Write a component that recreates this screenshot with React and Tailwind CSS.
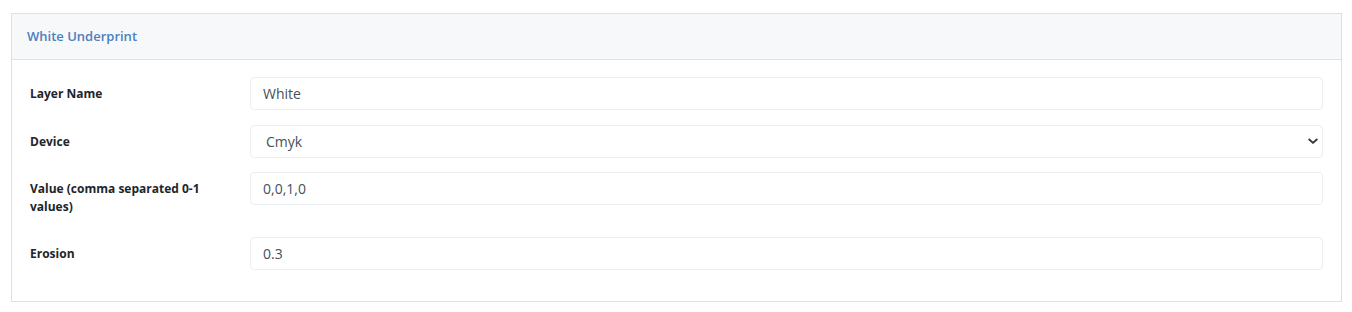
import { useState } from 'react';

const Row = ({ label, children, last }) => (
  <div className={`grid grid-cols-[205px_1fr] gap-x-[15px] ${last ? '' : 'mb-[14.5px]'}`}>
    <label className="pt-[8px] pb-[6px] text-[12px] leading-[18px] font-bold text-[#212529]">{label}</label>
    <div>{children}</div>
  </div>
);

const inputCls =
  'w-full h-[33px] px-[12px] rounded-[4px] border border-[#eceef1] bg-white text-[14px] text-[#495057] outline-none';

export default function App() {
  const [name, setName] = useState('White');
  const [device, setDevice] = useState('Cmyk');
  const [value, setValue] = useState('0,0,1,0');
  const [erosion, setErosion] = useState('0.3');

  return (
    <div className="min-h-screen bg-white pl-[11px] pr-[10px] pt-[13px] font-['Open_Sans',sans-serif]">
      <div className="border border-[#dfe0e5] bg-white">
        <div className="h-[46px] flex items-center px-[15px] bg-[#f7f8fa] border-b border-[#dfe0e5]">
          <h3 className="text-[13px] font-semibold text-[#4a7fc1]">White Underprint</h3>
        </div>
        <div className="pt-[17px] px-[18px] pb-[31px]">
          <Row label="Layer Name">
            <input className={inputCls} value={name} onChange={(e) => setName(e.target.value)} />
          </Row>
          <Row label="Device">
            <div className="relative">
              <select
                className={`${inputCls} appearance-none pl-[15px]`}
                value={device}
                onChange={(e) => setDevice(e.target.value)}
              >
                <option>Cmyk</option>
                <option>Rgb</option>
                <option>Gray</option>
              </select>
              <svg
                className="absolute right-[4px] top-1/2 -translate-y-1/2 pointer-events-none"
                width="12"
                height="12"
                viewBox="0 0 16 16"
              >
                <path d="M3 6l5 4.5L13 6" fill="none" stroke="#343a40" strokeWidth="2.6" strokeLinecap="round" strokeLinejoin="round" />
              </svg>
            </div>
          </Row>
          <Row label="Value (comma separated 0-1 values)">
            <input className={inputCls} value={value} onChange={(e) => setValue(e.target.value)} />
          </Row>
          <Row label="Erosion" last>
            <input className={inputCls} value={erosion} onChange={(e) => setErosion(e.target.value)} />
          </Row>
        </div>
      </div>
    </div>
  );
}
